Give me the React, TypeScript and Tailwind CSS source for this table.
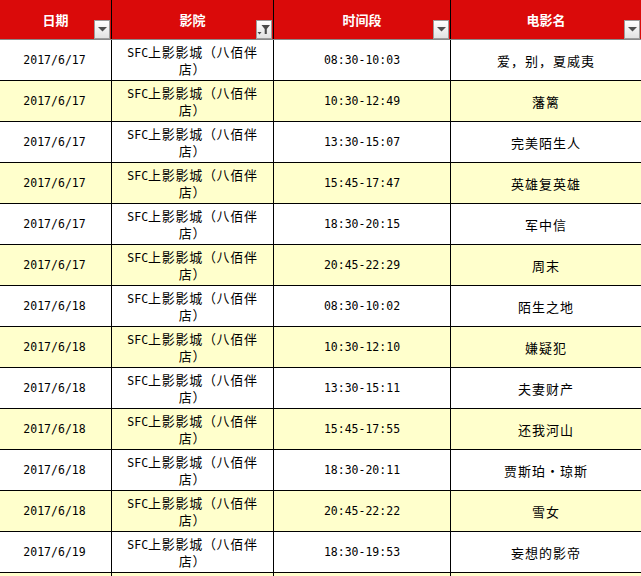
import React from "react";

const rows: [string, string, string][] = [
  ["2017/6/17", "08:30-10:03", "爱，别，夏威夷"],
  ["2017/6/17", "10:30-12:49", "藩篱"],
  ["2017/6/17", "13:30-15:07", "完美陌生人"],
  ["2017/6/17", "15:45-17:47", "英雄复英雄"],
  ["2017/6/17", "18:30-20:15", "军中信"],
  ["2017/6/17", "20:45-22:29", "周末"],
  ["2017/6/18", "08:30-10:02", "陌生之地"],
  ["2017/6/18", "10:30-12:10", "嫌疑犯"],
  ["2017/6/18", "13:30-15:11", "夫妻财产"],
  ["2017/6/18", "15:45-17:55", "还我河山"],
  ["2017/6/18", "18:30-20:11", "贾斯珀·琼斯"],
  ["2017/6/18", "20:45-22:22", "雪女"],
  ["2017/6/19", "18:30-19:53", "妄想的影帝"],
];

const mono = "[font-family:'DejaVu_Sans_Mono','Noto_Sans_CJK_SC',monospace]";

function DropBtn({ filtered }: { filtered?: boolean }) {
  return (
    <div className="absolute right-[1px] bottom-0 w-[16px] h-[19px] border border-[#9c9c9c] bg-gradient-to-b from-white to-[#e2e2e2] flex items-center justify-center">
      {filtered ? (
        <svg width="14" height="13" viewBox="0 0 14 13">
          <path d="M4.5 2 H13 L9.8 6 V11 H7.7 V6 Z" fill="#4a4a4a" />
          <path d="M0.5 9 H4.5 L2.5 11.5 Z" fill="#4a4a4a" />
        </svg>
      ) : (
        <svg width="9" height="5" viewBox="0 0 9 5">
          <path d="M0 0 H9 L4.5 4.5 Z" fill="#4f4f4f" />
        </svg>
      )}
    </div>
  );
}

export default function App() {
  const cols = ["w-[112px]", "w-[162px]", "w-[177px]", "w-[190px]"];
  const headers = ["日期", "影院", "时间段", "电影名"];
  return (
    <div className="w-[641px] h-[576px] overflow-hidden bg-white text-black [font-family:'Noto_Sans_CJK_SC',sans-serif]">
      <div className="flex h-[40px] bg-[#da0a0a] border-b border-[#8a8a8a]">
        {headers.map((h, i) => (
          <div
            key={h}
            className={`${cols[i]} relative flex items-center justify-center ${i < 3 ? "border-r border-black" : ""}`}
          >
            <span className="text-white font-bold text-[13px] leading-none pb-[1px]">{h}</span>
            <DropBtn filtered={i === 1} />
          </div>
        ))}
      </div>
      {rows.map((r, idx) => (
        <div
          key={idx}
          className={`flex h-[41px] border-b border-black ${idx % 2 === 1 ? "bg-[#ffffcc]" : "bg-white"}`}
        >
          <div className={`${cols[0]} border-r border-black flex items-center justify-center pt-[2px] pr-[2px] ${mono} text-[11.5px]`}>
            {r[0]}
          </div>
          <div className={`${cols[1]} border-r border-black flex flex-col items-center justify-center leading-[16px]`}>
            <div className="whitespace-nowrap flex items-baseline">
              <span className={`${mono} text-[11.5px]`}>SFC</span>
              <span className="text-[13px] tracking-[0.7px]">上影影城（八佰伴</span>
            </div>
            <div className="text-[13px] tracking-[0.7px] whitespace-nowrap">店）</div>
          </div>
          <div className={`${cols[2]} border-r border-black flex items-center justify-center pt-[2px] ${mono} text-[11.5px]`}>
            {r[1]}
          </div>
          <div className={`${cols[3]} flex items-center justify-center pt-[2px] text-[13px] tracking-[1px]`}>
            {r[2]}
          </div>
        </div>
      ))}
      <div className="flex h-[41px] bg-[#ffffcc]">
        <div className={`${cols[0]} border-r border-black`} />
        <div className={`${cols[1]} border-r border-black`} />
        <div className={`${cols[2]} border-r border-black`} />
        <div className={cols[3]} />
      </div>
    </div>
  );
}
